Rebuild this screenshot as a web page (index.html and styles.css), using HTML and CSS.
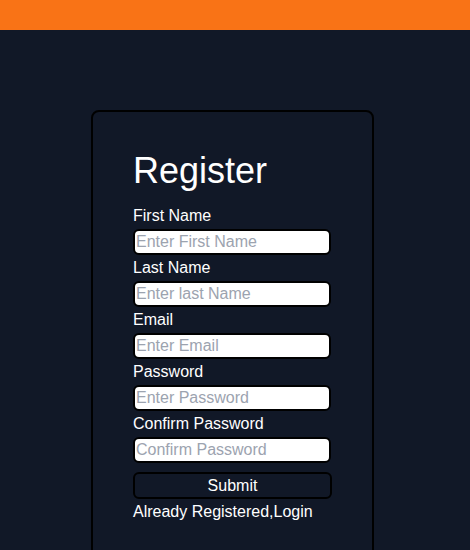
FILE: index.html
```html
<!DOCTYPE html>
<html lang="en">
<head>
<meta charset="utf-8">
<title>Register</title>
<link rel="stylesheet" href="styles.css">
</head>
<body>
<header class="topbar"></header>
<main class="page">
  <section class="card">
    <h1 class="title">Register</h1>
    <form class="form">
      <label class="label" for="fn">First Name</label>
      <input class="field" id="fn" type="text" placeholder="Enter First Name">
      <label class="label" for="ln">Last Name</label>
      <input class="field" id="ln" type="text" placeholder="Enter last Name">
      <label class="label" for="em">Email</label>
      <input class="field" id="em" type="email" placeholder="Enter Email">
      <label class="label" for="pw">Password</label>
      <input class="field" id="pw" type="password" placeholder="Enter Password">
      <label class="label" for="cpw">Confirm Password</label>
      <input class="field" id="cpw" type="password" placeholder="Confirm Password">
      <button class="submit" type="button">Submit</button>
      <p class="login">Already Registered,Login</p>
    </form>
  </section>
</main>
</body>
</html>
```
FILE: styles.css
```css
html, body {
  margin: 0;
  padding: 0;
  background: #111827;
  font-family: "Liberation Sans", Arial, sans-serif;
  color: #ffffff;
  height: 100%;
  overflow: hidden;
}

.topbar {
  height: 30px;
  background: #f97316;
}

.page {
  display: flex;
  justify-content: center;
  padding-top: 80px;
  padding-right: 5px;
  height: 520px;
  box-sizing: border-box;
  overflow: hidden;
}

.card {
  width: 283px;
  height: 460px;
  flex-shrink: 0;
  box-sizing: border-box;
  border: 2px solid #000000;
  border-radius: 8px;
  padding: 38px 41px 0 40px;
}

.title {
  margin: 0 0 15px 0;
  font-size: 36px;
  font-weight: normal;
  line-height: 42px;
}

.form {
  display: flex;
  flex-direction: column;
  gap: 4px;
  margin: 0;
}

.label {
  font-size: 16px;
  line-height: 18px;
}

.field {
  box-sizing: border-box;
  width: 198px;
  height: 26px;
  margin: 0;
  padding: 0 1px;
  border: 2px solid #000000;
  border-radius: 6px;
  background: #ffffff;
  font-family: "Liberation Sans", Arial, sans-serif;
  font-size: 16px;
  color: #111827;
  outline: none;
}

.field::placeholder {
  color: #9ca3af;
}

.submit {
  box-sizing: border-box;
  width: 199px;
  height: 27px;
  margin: 5px 0 0 0;
  padding: 0;
  border: 2px solid #000000;
  border-radius: 6px;
  background: #111827;
  color: #ffffff;
  font-family: "Liberation Sans", Arial, sans-serif;
  font-size: 16px;
}

.login {
  margin: 0;
  font-size: 16px;
  line-height: 18px;
}
```
